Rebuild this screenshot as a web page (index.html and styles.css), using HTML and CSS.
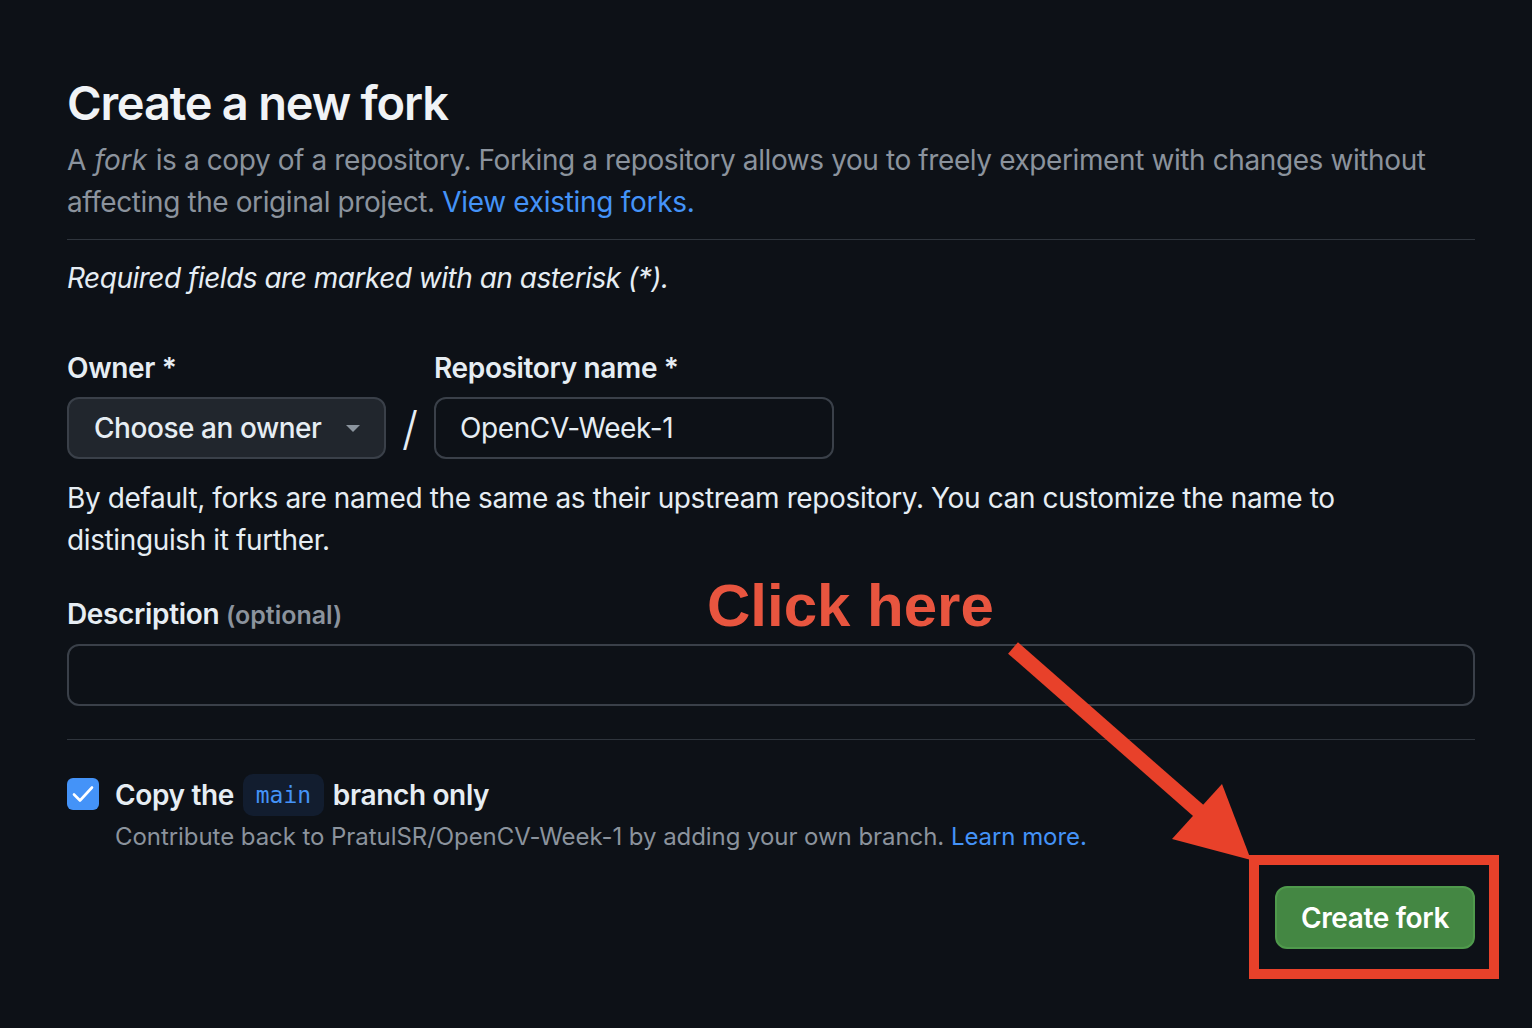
FILE: index.html
```html
<!DOCTYPE html>
<html lang="en">
<head>
<meta charset="utf-8">
<title>Create a new fork</title>
<link rel="stylesheet" href="styles.css">
</head>
<body>
<main class="page">
  <h1 class="title">Create a new fork</h1>
  <p class="lead">A <em>fork</em> is a copy of a repository. Forking a repository allows you to freely experiment with changes without affecting the original project. <a href="#" class="link">View existing forks.</a></p>
  <hr class="divider">
  <p class="required">Required fields are marked with an asterisk (*).</p>

  <div class="name-row">
    <div class="field owner-field">
      <label class="label">Owner *</label>
      <button class="select" type="button">
        <span>Choose an owner</span>
        <svg class="caret" width="14" height="8" viewBox="0 0 14 8"><path d="M0 0h14L7 7z" fill="#8b949e"/></svg>
      </button>
    </div>
    <span class="slash">/</span>
    <div class="field repo-field">
      <label class="label">Repository name *</label>
      <div class="input">OpenCV-Week-1</div>
    </div>
  </div>
  <p class="hint">By default, forks are named the same as their upstream repository. You can customize the name to distinguish it further.</p>

  <div class="field desc-field">
    <label class="label">Description <span class="optional">(optional)</span></label>
    <div class="input wide"></div>
  </div>

  <hr class="divider second">

  <div class="check-row">
    <span class="checkbox">
      <svg width="22" height="18" viewBox="0 0 22 18"><path d="M2 9.5l6 6L20 2.5" fill="none" stroke="#ffffff" stroke-width="2.6" stroke-linecap="round" stroke-linejoin="round"/></svg>
    </span>
    <div class="check-text">
      <div class="check-title">Copy the <code class="branch">main</code> branch only</div>
      <div class="check-note">Contribute back to PratulSR/OpenCV-Week-1 by adding your own branch. <a href="#" class="link">Learn more.</a></div>
    </div>
  </div>

  <div class="actions">
    <button class="btn-primary" type="button">Create fork</button>
  </div>
</main>

<div class="callout-text">Click here</div>
<svg class="callout" width="1532" height="1028" viewBox="0 0 1532 1028">
  <line x1="1013" y1="648" x2="1200" y2="812" stroke="#e8412a" stroke-width="15"/>
  <polygon points="1172,839 1222,784 1251,860" fill="#e8412a"/>
  <rect x="1254" y="860" width="240" height="114" fill="none" stroke="#e8412a" stroke-width="10"/>
</svg>
</body>
</html>
```
FILE: styles.css
```css
* { box-sizing: border-box; }
html, body {
  margin: 0;
  padding: 0;
  background: #0d1117;
}
body {
  width: 1532px;
  height: 1028px;
  overflow: hidden;
  position: relative;
  font-family: Inter, "Noto Sans", sans-serif;
  color: #e6edf3;
}
.page {
  padding: 73px 57px 0 67px;
  width: 1532px;
}
.title {
  margin: 0;
  font-size: 47px;
  line-height: 60px;
  font-weight: 600;
  letter-spacing: -1.2px;
  color: #f0f3f6;
}
.lead {
  margin: 6px 0 0;
  font-size: 28px;
  line-height: 42px;
  color: #8b939d;
  letter-spacing: -0.4px;
}
.lead em { font-style: italic; margin: 0 1px; letter-spacing: 0; }
.lead .link { letter-spacing: -0.3px; }
.link { color: #4493f8; text-decoration: none; }
.divider {
  border: 0;
  height: 1px;
  background: #2f353d;
  margin: 16px 0 0;
}
.required {
  margin: 17px 0 0;
  font-size: 28px;
  line-height: 42px;
  font-style: italic;
  letter-spacing: -0.5px;
}
.name-row {
  display: flex;
  align-items: flex-end;
  margin-top: 48px;
}
.field { display: flex; flex-direction: column; }
.label {
  font-size: 28px;
  line-height: 42px;
  font-weight: 600;
  margin-bottom: 8px;
  letter-spacing: -0.35px;
}
.optional {
  font-size: 25px;
  color: #8b939d;
  font-weight: 600;
  letter-spacing: 0;
}
.select {
  width: 319px;
  height: 62px;
  background: #21262d;
  border: 2px solid #3a4049;
  border-radius: 12px;
  color: #e6edf3;
  font-family: inherit;
  font-size: 28px;
  font-weight: 500;
  letter-spacing: -0.45px;
  display: flex;
  align-items: center;
  justify-content: space-between;
  padding: 0 24px 0 25px;
}
.caret { margin-top: 2px; }
.slash {
  width: 48px;
  height: 62px;
  text-align: center;
  font-size: 46px;
  line-height: 62px;
  font-weight: 300;
  color: #e6edf3;
}
.input {
  height: 62px;
  border: 2px solid #3a4049;
  border-radius: 12px;
  background: #0d1117;
  font-size: 28px;
  line-height: 58px;
  padding: 0 24px;
  letter-spacing: -0.4px;
}
.repo-field .input { width: 400px; }
.input.wide { width: 1408px; }
.hint {
  margin: 18px 0 0;
  font-size: 28px;
  line-height: 42px;
  letter-spacing: -0.38px;
}
.desc-field { margin-top: 32px; }
.divider.second { margin-top: 33px; }
.check-row {
  display: flex;
  gap: 16px;
  margin-top: 34px;
}
.checkbox {
  width: 32px;
  height: 32px;
  margin-top: 4px;
  border-radius: 6px;
  background: #4493f8;
  display: flex;
  align-items: center;
  justify-content: center;
  flex-shrink: 0;
}
.check-title {
  font-size: 28px;
  line-height: 42px;
  font-weight: 600;
  letter-spacing: -0.35px;
}
.branch {
  display: inline-block;
  font-family: "DejaVu Sans Mono", "Liberation Mono", monospace;
  font-size: 23px;
  line-height: 42px;
  font-weight: 400;
  color: #4493f8;
  background: #121d2f;
  border-radius: 10px;
  padding: 0 13px;
  margin: 0 2px;
  letter-spacing: 0;
  vertical-align: top;
}
.check-note {
  margin-top: 3px;
  font-size: 24px;
  line-height: 36px;
  color: #8b939d;
  letter-spacing: -0.06px;
}
.actions {
  display: flex;
  justify-content: flex-end;
  margin-top: 31px;
}
.btn-primary {
  width: 200px;
  height: 63px;
  background: #448743;
  border: 2px solid #4f9a4c;
  border-radius: 12px;
  color: #ffffff;
  font-family: inherit;
  font-size: 28px;
  font-weight: 600;
  letter-spacing: -0.35px;
}
.callout-text {
  position: absolute;
  left: 707px;
  top: 576px;
  font-family: "Liberation Sans", Arial, sans-serif;
  font-weight: 700;
  font-size: 60px;
  line-height: 60px;
  color: #e8553f;
}
.callout {
  position: absolute;
  left: 0;
  top: 0;
  pointer-events: none;
}
```
